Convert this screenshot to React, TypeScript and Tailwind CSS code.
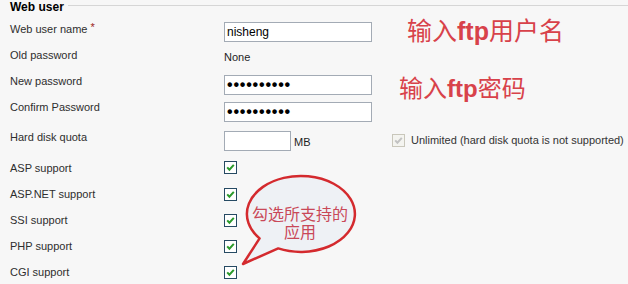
import type { ReactNode } from 'react';

const labelFont = { fontFamily: '"Liberation Sans", Arial, sans-serif' };
const cjkFont = { fontFamily: '"Noto Sans CJK SC", "Liberation Sans", sans-serif' };

function CheckBox({ disabled = false }: { disabled?: boolean }) {
  return (
    <svg width="13" height="13" viewBox="0 0 13 13" className="block">
      <rect
        x="0.5"
        y="0.5"
        width="12"
        height="12"
        fill={disabled ? '#f4f4f0' : '#ffffff'}
        stroke={disabled ? '#c9c7bb' : '#264a63'}
      />
      <path
        d="M3.2 6.4 L5.4 8.7 L9.8 3.9"
        fill="none"
        stroke={disabled ? '#c2c2c2' : '#2b9a2b'}
        strokeWidth="2"
      />
    </svg>
  );
}

function TextBox({ children, width = 'w-[148px]' }: { children?: ReactNode; width?: string }) {
  return (
    <div
      className={`flex h-[20px] ${width} items-center border border-[#a3abb5] bg-white px-[2px] text-[12px] text-black`}
    >
      {children}
    </div>
  );
}

function Dots() {
  return (
    <span className="text-[16px] font-bold leading-none tracking-[0.8px] text-black">
      ••••••••••
    </span>
  );
}

interface RowProps {
  label: ReactNode;
  height: string;
  fieldTop?: string;
  children?: ReactNode;
}

function Row({ label, height, fieldTop = 'pt-[4px]', children }: RowProps) {
  return (
    <div className={`flex ${height}`}>
      <div className="w-[224px] shrink-0 pl-[10px] pt-[3px] text-[11px] leading-[14px] text-[#2e2e2e]">
        {label}
      </div>
      <div className={`flex-1 text-[11px] leading-[14px] ${fieldTop}`}>{children}</div>
    </div>
  );
}

export default function App() {
  return (
    <div className="relative h-[284px] w-[628px] overflow-hidden bg-[#f7f7f7]" style={labelFont}>
      <div className="flex h-[19px] items-start">
        <div className="pl-[10px] text-[12px] font-bold leading-[14px] text-black">Web user</div>
        <div className="ml-[4px] mt-[5px] h-px flex-1 bg-[#d6d6d6]" />
      </div>

      <Row
        height="h-[26px]"
        fieldTop="pt-[3px]"
        label={
          <>
            Web user name <span className="relative -top-[2px] text-[#9b1c1c]">*</span>
          </>
        }
      >
        <TextBox>nisheng</TextBox>
      </Row>
      <Row height="h-[26px]" fieldTop="pt-[5px]" label="Old password">
        <div className="text-[#1e1e1e]">None</div>
      </Row>
      <Row height="h-[26px]" label="New password">
        <TextBox>
          <Dots />
        </TextBox>
      </Row>
      <Row height="h-[30px]" fieldTop="pt-[5px]" label="Confirm Password">
        <TextBox>
          <Dots />
        </TextBox>
      </Row>
      <Row height="h-[31px]" label="Hard disk quota">
        <div className="flex items-start">
          <div className="flex w-[168px] items-center">
            <TextBox width="w-[67px] h-[19px]" />
            <span className="ml-[3px] mt-[2px] text-[#1e1e1e]">MB</span>
          </div>
          <div className="mt-[3px] flex items-center gap-[6px] leading-[13px] text-[#333]">
            <CheckBox disabled />
            <span>Unlimited (hard disk quota is not supported)</span>
          </div>
        </div>
      </Row>
      <Row height="h-[26px]" fieldTop="pt-[3px]" label="ASP support">
        <CheckBox />
      </Row>
      <Row height="h-[26px]" label="ASP.NET support">
        <CheckBox />
      </Row>
      <Row height="h-[26px]" label="SSI support">
        <CheckBox />
      </Row>
      <Row height="h-[26px]" label="PHP support">
        <CheckBox />
      </Row>
      <Row height="h-[22px]" label="CGI support">
        <CheckBox />
      </Row>

      {/* red annotations drawn over the form */}
      <div
        className="absolute left-[407px] top-[17px] whitespace-nowrap text-[25px] leading-none text-[#d8424a]"
        style={cjkFont}
      >
        输入<span className="font-bold" style={labelFont}>ftp</span>用户名
      </div>
      <div
        className="absolute left-[399px] top-[75px] whitespace-nowrap text-[24px] leading-none text-[#d8424a]"
        style={cjkFont}
      >
        输入<span className="font-bold" style={labelFont}>ftp</span>密码
      </div>

      <svg
        className="absolute left-[238px] top-[172px]"
        width="122"
        height="96"
        viewBox="0 0 122 96"
      >
        <path
          d="M40.2 76.4 A54 38 0 1 0 21.6 66.4 L5 92 Z"
          fill="#eef1f5"
          stroke="#d42a2e"
          strokeWidth="2.5"
          strokeLinejoin="round"
        />
      </svg>
      <div
        className="absolute left-[252px] top-[204px] flex w-[96px] flex-col items-center text-[16px] leading-[18px] text-[#c94858]"
        style={cjkFont}
      >
        <span className="h-[18px]">勾选所支持的</span>
        <span className="h-[18px]">应用</span>
      </div>
    </div>
  );
}
